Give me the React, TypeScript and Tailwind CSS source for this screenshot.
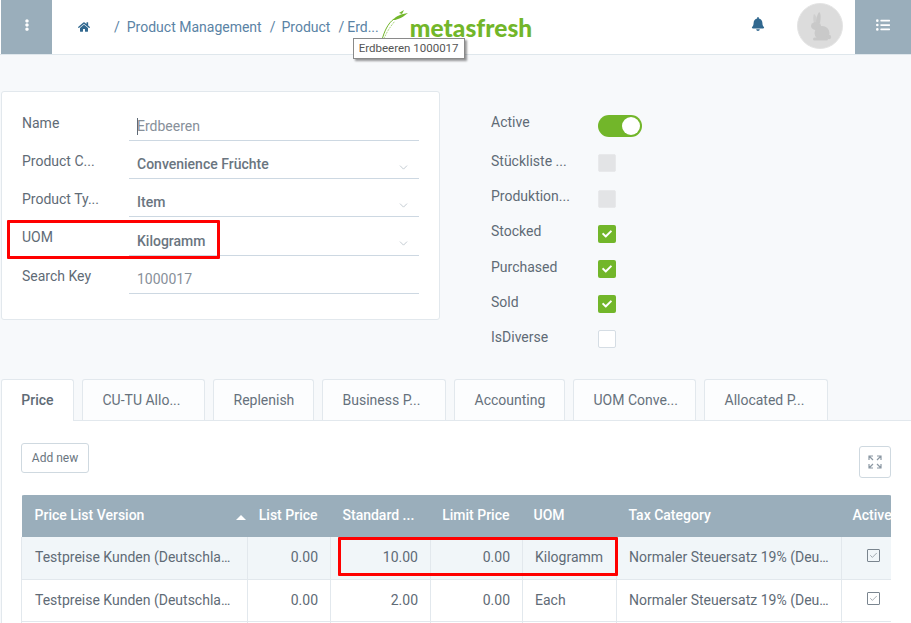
import { Check, ChevronDown } from "lucide-react";
import { FaBell, FaCheck, FaEllipsisV, FaHome, FaListUl } from "react-icons/fa";

function Field({ label, value, select, muted, cursor, tall }: { label: string; value: string; select?: boolean; muted?: boolean; cursor?: boolean; tall?: boolean }) {
  return (
    <div className={`flex items-start ${tall ? "h-[39px]" : "h-[38px]"}`}>
      <div className="w-[107px] truncate pr-2 pt-[10px] text-[14px] leading-[20px] text-[#5f6b76]">{label}</div>
      <div className={`relative h-full flex-1 border-b border-[#cdd8e2] pl-2 leading-[20px] ${tall ? "pt-[14px]" : "pt-[13px]"}`}>
        {cursor && <span className="absolute left-[8px] top-[15px] h-[17px] w-px bg-[#5f6b76]" />}
        <span className={muted ? "text-[14px] text-[#87909a]" : "text-[14px] font-medium text-[#6a7580]"}>{value}</span>
        {select && <ChevronDown className="absolute right-[9px] top-[20px] text-[#b5bfc8]" size={13} strokeWidth={1.5} />}
      </div>
    </div>
  );
}

function Flag({ label, state }: { label: string; state: "on" | "off" | "disabled" }) {
  return (
    <div className="flex h-[35.2px] items-start">
      <div className="w-[107px] truncate pr-1 text-[14px] leading-[20px] text-[#5f6b76]">{label}</div>
      {state === "on" && (
        <div className="mt-[3.4px] flex h-[18px] w-[18px] items-center justify-center rounded-[2px] bg-[#72b62a]">
          <FaCheck size={10} className="text-white" />
        </div>
      )}
      {state === "disabled" && <div className="mt-[3.4px] h-[18px] w-[18px] rounded-[2px] border border-[#e8e9eb] bg-[#e3e4e6]" />}
      {state === "off" && <div className="mt-[3.4px] h-[18px] w-[18px] rounded-[2px] border border-[#d5dde4] bg-white" />}
    </div>
  );
}

const tabs = [
  { label: "CU-TU Allo...", w: "w-[123px]" },
  { label: "Replenish", w: "w-[101px]" },
  { label: "Business P...", w: "w-[124px]" },
  { label: "Accounting", w: "w-[111px]" },
  { label: "UOM Conve...", w: "w-[123px]" },
  { label: "Allocated P...", w: "w-[124px]" },
];

const rows = [
  { list: "0.00", std: "10.00", limit: "0.00", uom: "Kilogramm", selected: true },
  { list: "0.00", std: "2.00", limit: "0.00", uom: "Each", selected: false },
];

export default function App() {
  return (
    <div className="relative h-[623px] w-[911px] overflow-hidden bg-[#f7f9fb] font-['Roboto',sans-serif]">
      {/* Header */}
      <header className="flex h-[55px] items-stretch border-b border-[#dfe7ec] bg-white">
        <div className="ml-px flex w-[51px] items-center justify-center bg-[#9aaebb] pb-[4px] pl-px text-white">
          <FaEllipsisV size={12} />
        </div>
        <div className="flex flex-1 items-center text-[14px] text-[#5a83a5]">
          <FaHome size={12} className="ml-[26px] text-[#31688f]" />
          <span className="ml-[24px]">/</span>
          <span className="ml-[7px]">Product Management</span>
          <span className="ml-[8px]">/</span>
          <span className="ml-[6px]">Product</span>
          <span className="ml-[8px]">/</span>
          <span className="ml-[3px]">Erd...</span>
          <div className="relative ml-[2px] flex h-[40px] items-center">
            <svg width="28" height="30" viewBox="0 0 28 30" fill="none" className="mb-[5px]">
              <path d="M1 30C3 22 7 13 13 9" stroke="#72b62a" strokeWidth="1" />
              <path d="M3 29C5 23 9 17 14 11" stroke="#72b62a" strokeWidth="0.6" strokeDasharray="2 1" />
              <path d="M12 10C15 6 20 4 27 3C23 6 21 8 17 9C15 10 13 10 12 10Z" fill="#72b62a" />
              <path d="M18 3L23 0L21 4Z" fill="#72b62a" />
            </svg>
            <span className="ml-[1px] mt-[2px] font-['Lato',sans-serif] text-[24.5px] font-black leading-none tracking-[0.05px] text-[#72b62a]">metasfresh</span>
            <div className="absolute left-[-28px] top-[31px] z-10 whitespace-nowrap border border-[#8a8a8a] bg-white px-[5px] py-[1px] text-[11.5px] leading-[17px] text-[#555] shadow-[2px_2px_2px_rgba(0,0,0,0.4)]">
              Erdbeeren 1000017
            </div>
          </div>
        </div>
        <div className="flex items-center pr-[12px]">
          <FaBell size={14} className="mr-[32px] mb-[6px] text-[#31688f]" />
          <div className="mb-[2px] flex h-[46px] w-[46px] items-center justify-center rounded-full border border-[#e4e4e4] bg-[#dcdcdc]">
            <svg width="24" height="29" viewBox="0 0 24 29" fill="#c9c9c9">
              <path d="M8 11C8 7 9 3 11 0C13 1 13 6 12 11Z" />
              <path d="M6 11C5 8 5 4 6 2C8 3 9 7 9 10Z" opacity="0.7" />
              <ellipse cx="8" cy="14" rx="5" ry="4" />
              <ellipse cx="14" cy="21" rx="7.5" ry="7" />
              <rect x="5" y="25.5" width="15" height="3" rx="1.5" />
              <circle cx="21" cy="25" r="2.2" />
            </svg>
          </div>
        </div>
        <div className="flex w-[56px] items-center justify-center bg-[#9aaebb] pb-[4px] text-white">
          <FaListUl size={14} />
        </div>
      </header>

      {/* Form */}
      <section className="mt-[36px] flex items-start pl-px">
        <div className="h-[229px] w-[439px] rounded-[3px] border border-[#e2e8ed] bg-white pl-[20px] pr-[20px] pt-[11px]">
          <Field label="Name" value="Erdbeeren" muted cursor />
          <Field label="Product C..." value="Convenience Früchte" select />
          <Field label="Product Ty..." value="Item" select />
          <Field label="UOM" value="Kilogramm" select tall />
          <Field label="Search Key" value="1000017" muted />
        </div>
        <div className="ml-[51px] pt-[21px]">
          <div className="flex h-[39px] items-start">
            <div className="w-[107px] text-[14px] leading-[20px] text-[#5f6b76]">Active</div>
            <div className="mt-[3px] flex h-[22px] w-[44px] items-center justify-end rounded-full bg-[#72b62a] pr-[2px]">
              <span className="h-[18px] w-[18px] rounded-full bg-white" />
            </div>
          </div>
          <Flag label="Stückliste ..." state="disabled" />
          <Flag label="Produktion..." state="disabled" />
          <Flag label="Stocked" state="on" />
          <Flag label="Purchased" state="on" />
          <Flag label="Sold" state="on" />
          <Flag label="IsDiverse" state="off" />
        </div>
      </section>

      {/* Tabs */}
      <div className="absolute left-px right-0 top-[379px]">
        <div className="relative z-10 flex h-[41px] gap-[8px]">
          <div className="flex h-[42px] w-[73px] items-center justify-center rounded-t-[3px] border border-b-0 border-[#e2e8ed] bg-white text-[14px] font-medium text-[#5f6b76]">Price</div>
          {tabs.map((t) => (
            <div key={t.label} className={`flex h-[41px] items-center rounded-t-[3px] border border-b-0 border-[#e2e8ed] bg-[#fcfdfe] pl-[19.5px] text-[14px] text-[#66717c] ${t.w}`}>
              {t.label}
            </div>
          ))}
        </div>
        <div className="h-[203px] border-l border-t border-[#e2e8ed] bg-white pl-[19px] pr-[19px]">
          <div className="flex items-start justify-between pt-[22px]">
            <button className="h-[30px] w-[68px] rounded-[3px] border border-[#cfd9e0] text-[12px] text-[#6a7580]">Add new</button>
            <button className="mr-px mt-[3px] flex h-[32px] w-[32px] items-center justify-center rounded-[3px] border border-[#cfd9e0] text-[#8b98a3]">
              <svg width="14" height="14" viewBox="0 0 14 14" fill="none" stroke="currentColor" strokeWidth="1.2">
                <path d="M1 5V1H5M1 1L5 5M9 1H13V5M13 1L9 5M1 9V13H5M1 13L5 9M9 13H13V9M13 13L9 9" />
              </svg>
            </button>
          </div>

          <div className="mt-[17px] overflow-hidden rounded-t-[3px]">
            <table className="w-[869px] table-fixed border-collapse text-[14px]">
              <colgroup>
                <col className="w-[226px]" />
                <col className="w-[83px]" />
                <col className="w-[100px]" />
                <col className="w-[92px]" />
                <col className="w-[94px]" />
                <col className="w-[225px]" />
                <col className="w-[49px]" />
              </colgroup>
              <thead>
                <tr className="h-[42px] bg-[#9aaebb] text-left font-medium text-white">
                  <th className="relative pb-[2px] pl-[13px] font-medium">
                    Price List Version
                    <span className="absolute right-[2px] top-[20px] h-0 w-0 border-x-[5px] border-b-[5px] border-x-transparent border-b-white" />
                  </th>
                  <th className="pb-[2px] pr-[13px] text-right font-medium">List Price</th>
                  <th className="pb-[2px] pl-[12px] font-medium">Standard ...</th>
                  <th className="pb-[2px] pr-[13px] text-right font-medium">Limit Price</th>
                  <th className="pb-[2px] pl-[11px] font-medium">UOM</th>
                  <th className="pb-[2px] pl-[12px] font-medium">Tax Category</th>
                  <th className="whitespace-nowrap pb-[2px] pl-[11px] font-medium">Active</th>
                </tr>
              </thead>
              <tbody className="text-[#5f6b76]">
                {rows.map((r) => (
                  <tr key={r.std} className={`h-[42px] border-b border-[#e2e8ed] ${r.selected ? "bg-[#f1f6f9]" : "bg-white"}`}>
                    <td className="truncate border-l border-r border-[#e2e8ed] pl-[13px] pr-[14px]">Testpreise Kunden (Deutschland)</td>
                    <td className="border-r border-[#e2e8ed] pr-[12px] text-right">{r.list}</td>
                    <td className="border-r border-[#e2e8ed] pr-[12px] text-right">{r.std}</td>
                    <td className="border-r border-[#e2e8ed] pr-[12px] text-right">{r.limit}</td>
                    <td className="border-r border-[#e2e8ed] pl-[12px]">{r.uom}</td>
                    <td className="truncate border-r border-[#e2e8ed] pl-[12px] pr-[10px]">Normaler Steuersatz 19% (Deutschland)</td>
                    <td className="pl-[25px]">
                      <div className="mb-[4px] flex h-[13px] w-[13px] items-center justify-center rounded-[1px] border border-[#7a858f]">
                        <Check size={9} strokeWidth={1.6} className="text-[#6a7580]" />
                      </div>
                    </td>
                  </tr>
                ))}
                <tr className="h-[42px] bg-white">
                  <td className="border-l border-r border-[#e2e8ed]" />
                  <td className="border-r border-[#e2e8ed]" />
                  <td className="border-r border-[#e2e8ed]" />
                  <td className="border-r border-[#e2e8ed]" />
                  <td className="border-r border-[#e2e8ed]" />
                  <td className="border-r border-[#e2e8ed]" />
                  <td />
                </tr>
              </tbody>
            </table>
          </div>
        </div>
      </div>

      {/* Annotation boxes over the screenshot */}
      <div className="absolute left-[7px] top-[220px] h-[39px] w-[213px] rounded-[1px] border-[3px] border-[#ff0000]" />
      <div className="absolute left-[338px] top-[537px] h-[39px] w-[280px] rounded-[1px] border-[3px] border-[#ff0000]" />
    </div>
  );
}
